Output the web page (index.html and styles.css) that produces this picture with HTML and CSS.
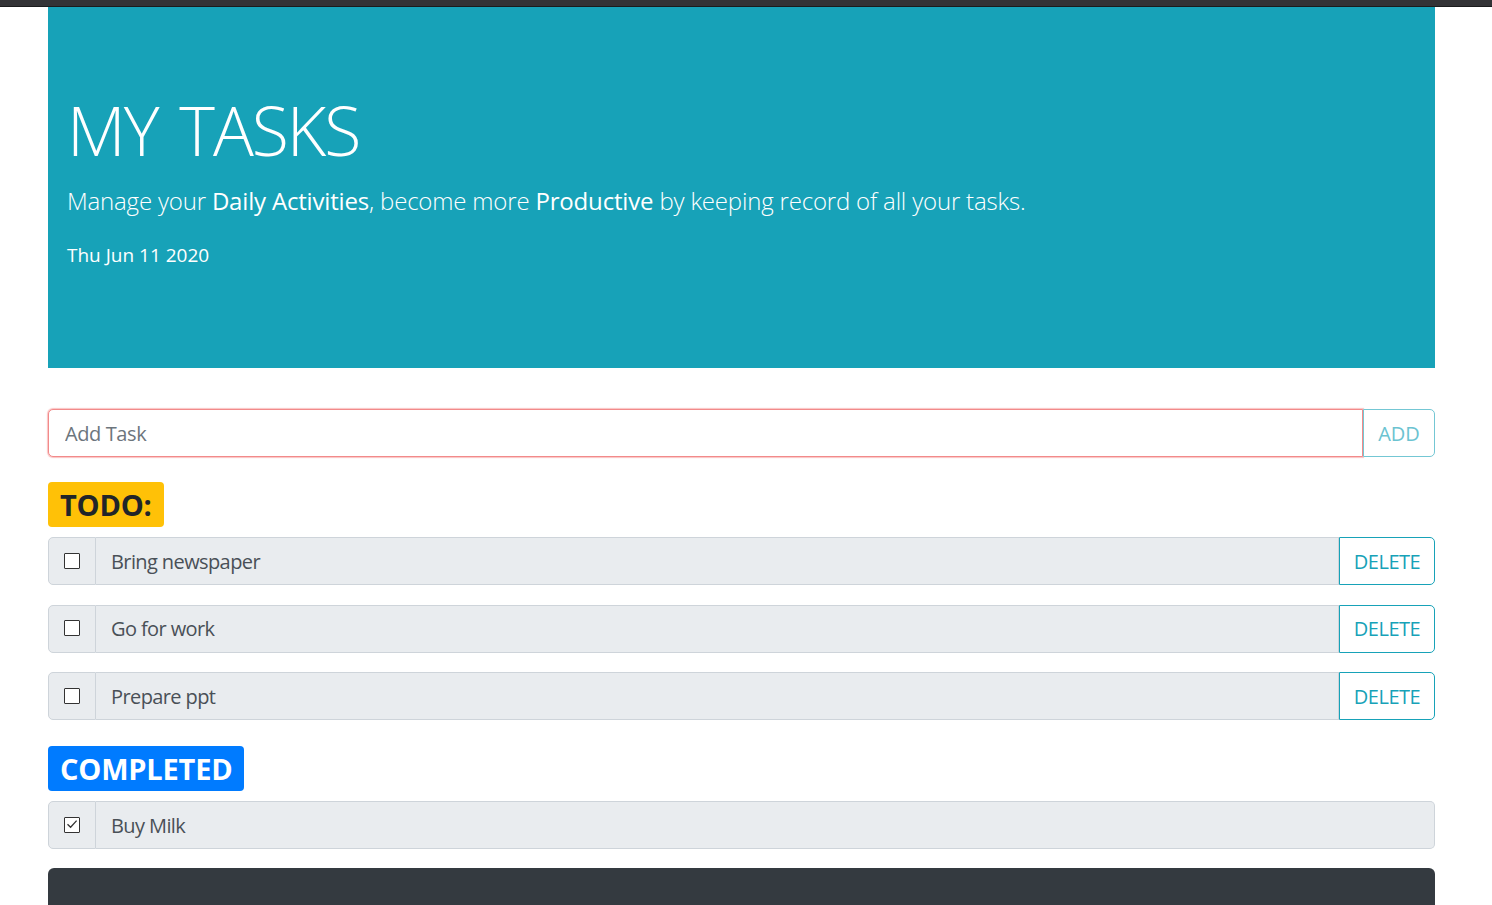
FILE: index.html
```html
<!DOCTYPE html>
<html lang="en">
<head>
<meta charset="utf-8">
<title>My Tasks</title>
<link rel="stylesheet" href="styles.css">
</head>
<body>
<div class="topbar"></div>
<div class="container">
  <header class="jumbotron">
    <h1 class="title">MY TASKS</h1>
    <p class="lead">Manage your <strong>Daily Activities</strong>, become more <strong>Productive</strong> by keeping record of all your tasks.</p>
    <p class="date">Thu Jun 11 2020</p>
  </header>

  <form class="add-group">
    <input class="add-input" type="text" placeholder="Add Task">
    <button class="add-btn" type="button" disabled>ADD</button>
  </form>

  <h2 class="section"><span class="badge badge-todo">TODO:</span></h2>
  <div class="task-list">
    <div class="task">
      <div class="task-check"><span class="box"></span></div>
      <div class="task-text">Bring newspaper</div>
      <button class="task-btn" type="button">DELETE</button>
    </div>
    <div class="task">
      <div class="task-check"><span class="box"></span></div>
      <div class="task-text">Go for work</div>
      <button class="task-btn" type="button">DELETE</button>
    </div>
    <div class="task">
      <div class="task-check"><span class="box"></span></div>
      <div class="task-text">Prepare ppt</div>
      <button class="task-btn" type="button">DELETE</button>
    </div>
  </div>

  <h2 class="section section-done"><span class="badge badge-done">COMPLETED</span></h2>
  <div class="task-list">
    <div class="task task-complete">
      <div class="task-check"><span class="box"><svg viewBox="0 0 16 16" width="16" height="16"><path d="M3.5 8.2 L6.6 11.2 L12.6 4.6" fill="none" stroke="#333" stroke-width="1.3"/></svg></span></div>
      <div class="task-text">Buy Milk</div>
    </div>
  </div>

  <footer class="footer"></footer>
</div>
</body>
</html>
```

FILE: styles.css
```css
html, body {
  margin: 0;
  padding: 0;
  background: #fff;
  overflow: hidden;
}
body {
  font-family: "Open Sans", "Noto Sans", sans-serif;
  color: #212529;
}
.topbar {
  height: 6px;
  background: #333336;
  border-bottom: 1px solid #1b1b1c;
}
.container {
  margin: 0 57px 0 48px;
  display: flex;
  flex-direction: column;
}
.jumbotron {
  background: #17a2b8;
  color: #fff;
  padding: 82px 19px 98px;
  height: 361px;
  box-sizing: border-box;
}
.title {
  margin: 0 0 12px;
  font-size: 68px;
  font-weight: 300;
  line-height: 1.2;
  letter-spacing: -2px;
  word-spacing: 6px;
}
.lead {
  margin: 0 0 22px;
  font-size: 24px;
  font-weight: 300;
  line-height: 1.5;
  letter-spacing: -0.18px;
}
.lead strong {
  font-weight: 400;
}
.date {
  margin: 0;
  font-size: 19px;
  font-weight: 400;
  line-height: 1.5;
}
.add-group {
  display: flex;
  margin: 41px 0 0;
  height: 48px;
}
.add-input {
  flex: 1;
  box-sizing: border-box;
  height: 48px;
  border: 1px solid #f28a8a;
  border-radius: 5px 0 0 5px;
  box-shadow: 0 0 1px 1px rgba(240, 80, 80, 0.35);
  padding: 8px 16px;
  font: 400 20px "Open Sans", "Noto Sans", sans-serif;
  letter-spacing: -0.4px;
  color: #495057;
  outline: none;
}
.add-input::placeholder {
  color: #6c757d;
}
.add-btn {
  width: 72px;
  height: 48px;
  background: #fff;
  border: 1px solid #74c7d4;
  border-radius: 0 5px 5px 0;
  color: #6cc3d1;
  font: 400 20px "Open Sans", "Noto Sans", sans-serif;
  padding: 0;
}
.section {
  margin: 24px 0 10px;
  line-height: 1;
  font-size: 40px;
}
.section-done {
  margin-top: 25px;
}
.badge {
  display: inline-block;
  font-size: 29px;
  font-weight: 700;
  line-height: 1;
  padding: 8px 12px;
  border-radius: 4px;
  letter-spacing: -0.2px;
}
.badge-todo {
  background: #ffc107;
  color: #212529;
}
.badge-done {
  background: #007bff;
  color: #fff;
}
.task-list {
  display: flex;
  flex-direction: column;
  gap: 19.5px;
}
.task {
  display: flex;
  height: 48px;
  box-sizing: border-box;
}
.task-check {
  width: 48px;
  box-sizing: border-box;
  background: #e9ecef;
  border: 1px solid #ced4da;
  border-radius: 5px 0 0 5px;
  display: flex;
  align-items: center;
  justify-content: center;
}
.box {
  width: 16px;
  height: 16px;
  box-sizing: border-box;
  border: 1.5px solid #333;
  background: #fff;
  border-radius: 1px;
  position: relative;
  margin-top: -1px;
}
.box svg {
  position: absolute;
  left: -1.5px;
  top: -1.5px;
}
.task-text {
  flex: 1;
  background: #e9ecef;
  border: 1px solid #ced4da;
  border-left: none;
  padding: 0 15px;
  display: flex;
  align-items: center;
  font-size: 20px;
  letter-spacing: -0.6px;
  color: #495057;
}
.task-complete .task-text {
  border-radius: 0 5px 5px 0;
}
.task-btn {
  width: 96px;
  background: #fff;
  border: 1px solid #17a2b8;
  border-radius: 0 5px 5px 0;
  color: #17a2b8;
  font: 400 20px "Open Sans", "Noto Sans", sans-serif;
  letter-spacing: -0.5px;
  padding: 0;
}
.footer {
  margin-top: 19px;
  height: 80px;
  background: #343a40;
  border-radius: 6px 6px 0 0;
}
```
